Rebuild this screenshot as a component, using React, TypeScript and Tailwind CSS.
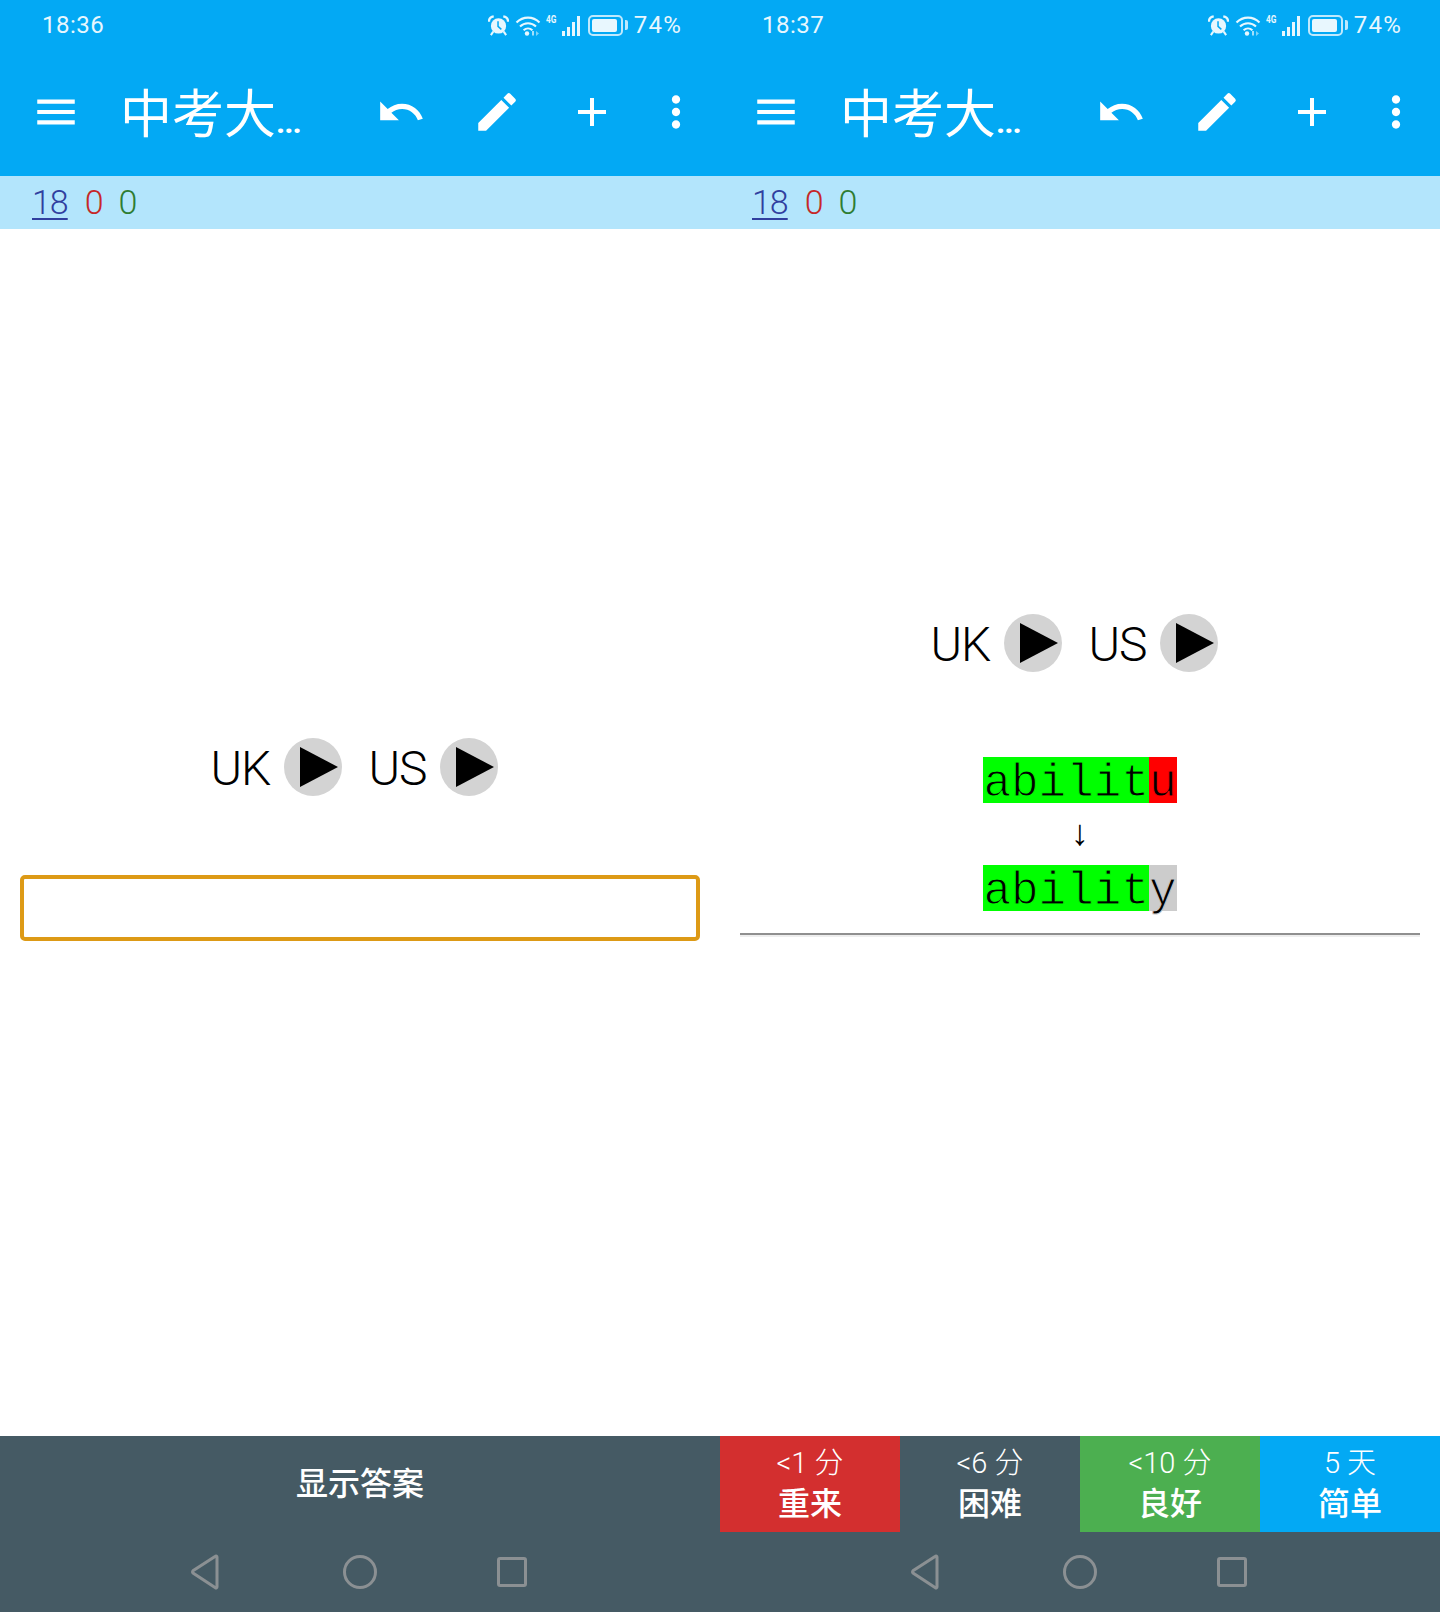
import { MdAdd, MdEdit, MdMenu, MdMoreVert, MdUndo } from 'react-icons/md'

const cjk = "font-['Roboto','Noto_Sans_CJK_SC',sans-serif]"

function StatusIcons() {
  return (
    <div className="flex items-center">
      {/* alarm */}
      <svg width="21" height="21" viewBox="0 0 22 21">
        <circle cx="11" cy="11" r="8" fill="#e8f7fe" />
        <path d="M10.5 6v5.5l3.5 3" fill="none" stroke="#03A9F4" strokeWidth="1.6" />
        <path d="M1 6.5c0-3 2-5 5-5.5M21 6.5c0-3-2-5-5-5.5" stroke="#e8f7fe" strokeWidth="2.4" fill="none" />
        <path d="M5.5 17l-2.5 3.5M16.5 17l2.5 3.5" stroke="#e8f7fe" strokeWidth="2.2" fill="none" />
      </svg>
      {/* wifi */}
      <svg width="26" height="21" viewBox="0 0 26 21" className="ml-[6px]">
        <path d="M1.5 7.5C8 1 18 1 24.5 7.5M5 11.5c4.5-4.3 11.5-4.3 16 0M8.6 15.2c2.5-2.2 6.3-2.2 8.8 0" fill="none" stroke="#e8f7fe" strokeWidth="2.1" />
        <circle cx="12" cy="18.5" r="2.2" fill="#e8f7fe" />
        <path d="M18 16v4.5" stroke="#e8f7fe" strokeWidth="1.4" />
        <path d="M21 16l3 2.5-3 2.5z" fill="#7fd3fa" />
      </svg>
      {/* 4G + signal */}
      <div className="relative ml-[5px] w-[34px] h-[21px]">
        <span className="absolute left-0 -top-[1px] text-[11px] leading-[12px] font-bold text-[#e8f7fe] font-['Roboto',sans-serif] scale-x-75 origin-left">
          4G
        </span>
        <div className="absolute right-0 bottom-0 flex items-end gap-[2px]">
          <div className="w-[3px] h-[5px] bg-[#e8f7fe]" />
          <div className="w-[3px] h-[9px] bg-[#e8f7fe]" />
          <div className="w-[3px] h-[14px] bg-[#e8f7fe]" />
          <div className="w-[3px] h-[20px] bg-[#e8f7fe]" />
        </div>
      </div>
      {/* battery */}
      <div className="ml-[8px] flex items-center">
        <div className="w-[35px] h-[21px] rounded-[5px] border-2 border-[#bfe9fd] p-[2px]">
          <div className="w-[25px] h-full rounded-[2px] bg-[#e8f7fe]" />
        </div>
        <div className="ml-[2px] w-[3px] h-[10px] rounded-r-[2px] bg-[#bfe9fd]" />
      </div>
      <span className="ml-[6px] text-[24px] leading-[28px] text-[#e8f7fe] tracking-[1.2px] font-['Roboto',sans-serif]">74%</span>
    </div>
  )
}

function Header({ time }: { time: string }) {
  return (
    <div className="bg-[#03A9F4] h-[176px] shrink-0">
      <div className="h-[48px] pt-[2px] pl-[42px] pr-[38px] flex items-center justify-between">
        <span className="text-[24px] leading-[28px] text-[#e8f7fe] tracking-[0.5px] font-['Roboto',sans-serif]">{time}</span>
        <StatusIcons />
      </div>
      <div className="h-[128px] relative flex items-center pl-[31px] text-white">
        <MdMenu size={50} />
        <span className={`ml-[39px] mt-[14px] w-[256px] text-[52px] leading-[60px] whitespace-nowrap ${cjk}`}>
          中考大<span className="text-[32px] font-bold tracking-[-1px]">...</span>
        </span>
        <MdUndo size={50} />
        <MdEdit size={50} className="ml-[46px]" />
        <MdAdd size={48} className="ml-[46px]" />
        <MdMoreVert size={50} className="ml-[35px]" />
      </div>
    </div>
  )
}

function Counts() {
  return (
    <div className="bg-[#B3E5FC] h-[53px] shrink-0 pl-[32px] flex items-center text-[34px] leading-[40px] font-light tracking-[-1px] font-['Roboto',sans-serif] pb-[1px]">
      <span className="text-[#303F9F] underline underline-offset-[4px] decoration-2">18</span>
      <span className="ml-[17px] text-[#C62828]">0</span>
      <span className="ml-[16px] text-[#2E7D32]">0</span>
    </div>
  )
}

function PlayButton() {
  return (
    <div className="w-[58px] h-[58px] rounded-full bg-[#D3D3D3] shrink-0 flex items-center justify-center">
      <svg width="58" height="58" viewBox="0 0 58 58">
        <path d="M16 9l38 20-38 20z" fill="#000" />
      </svg>
    </div>
  )
}

function AudioRow() {
  return (
    <div className="flex items-center justify-center h-[58px] pr-[11px] text-black text-[48px] leading-[60px] font-light font-['Roboto',sans-serif]">
      <span className="mt-[4px] tracking-[-1px]">UK</span>
      <div className="ml-[14px]">
        <PlayButton />
      </div>
      <span className="mt-[4px] ml-[26px] tracking-[-1px]">US</span>
      <div className="ml-[14px]">
        <PlayButton />
      </div>
    </div>
  )
}

function NavBar() {
  return (
    <div className="h-[80px] shrink-0 bg-[#455A64] flex items-center pl-[190px] pb-[1px]">
      <svg width="30" height="36" viewBox="0 0 30 36">
        <path d="M27 3v30a1 1 0 0 1-1.6.8L3 19a1.5 1.5 0 0 1 0-2.2L25.4 2.2A1 1 0 0 1 27 3z" fill="none" stroke="#8b9093" strokeWidth="3" />
      </svg>
      <svg width="34" height="36" viewBox="0 0 34 36" className="ml-[123px]">
        <circle cx="17" cy="18" r="15.5" fill="none" stroke="#8b9093" strokeWidth="3" />
      </svg>
      <div className="ml-[120px] w-[30px] h-[30px] rounded-[3px] border-[3px] border-[#8b9093]" />
    </div>
  )
}

function AnswerButton({ top, label, bg }: { top: string; label: string; bg: string }) {
  return (
    <div className={`flex-1 flex flex-col items-center text-white pt-[10px] ${bg} ${cjk}`}>
      <span className="text-[29px] leading-[34px] font-light">{top}</span>
      <span className="mt-[5px] text-[32px] leading-[38px] font-medium">{label}</span>
    </div>
  )
}

// thin the glyphs with a stroke in the colour of the box behind them
function Word({ head, tail, tailBg, tailStroke }: { head: string; tail: string; tailBg: string; tailStroke: string }) {
  return (
    <div className="flex justify-center h-[46px] text-[46px] leading-[54px] text-black font-['Liberation_Mono',monospace]">
      <span className="h-[46px] bg-[#00FF00] [-webkit-text-stroke:1px_#00FF00]">{head}</span>
      <span className={`h-[46px] ${tailBg} ${tailStroke}`}>{tail}</span>
    </div>
  )
}

export default function App() {
  return (
    <div className="w-[1440px] h-[1612px] flex bg-white overflow-hidden">
      {/* front of card */}
      <div className="w-[720px] h-full flex flex-col">
        <Header time="18:36" />
        <Counts />
        <div className="flex-1 pt-[509px]">
          <AudioRow />
          <div className="mt-[79px] mx-[20px] h-[66px] rounded-[5px] border-4 border-[#DD9A16]" />
        </div>
        <div className={`h-[96px] shrink-0 bg-[#455A64] flex items-center justify-center text-white text-[32px] leading-[40px] font-medium ${cjk}`}>
          显示答案
        </div>
        <NavBar />
      </div>

      {/* back of card */}
      <div className="w-[720px] h-full flex flex-col">
        <Header time="18:37" />
        <Counts />
        <div className="flex-1 pt-[385px]">
          <AudioRow />
          <div className="mt-[85px]">
            <Word head="abilit" tail="u" tailBg="bg-[#FF0000]" tailStroke="[-webkit-text-stroke:1px_#FF0000]" />
          </div>
          <div className="h-[62px] pb-[2px] flex items-center justify-center text-[36px] leading-[36px] text-black font-['Liberation_Serif',serif]">
            ↓
          </div>
          <Word head="abilit" tail="y" tailBg="bg-[#CCCCCC]" tailStroke="[-webkit-text-stroke:1px_#CCCCCC]" />
          <div className="mt-[22px] mx-[20px] h-[4px] bg-[#8f8f8f] border-b-2 border-[#eeeeee]" />
        </div>
        <div className="h-[96px] shrink-0 flex">
          <AnswerButton top="<1 分" label="重来" bg="bg-[#D32F2F]" />
          <AnswerButton top="<6 分" label="困难" bg="bg-[#455A64]" />
          <AnswerButton top="<10 分" label="良好" bg="bg-[#4CAF50]" />
          <AnswerButton top="5 天" label="简单" bg="bg-[#03A9F4]" />
        </div>
        <NavBar />
      </div>
    </div>
  )
}
